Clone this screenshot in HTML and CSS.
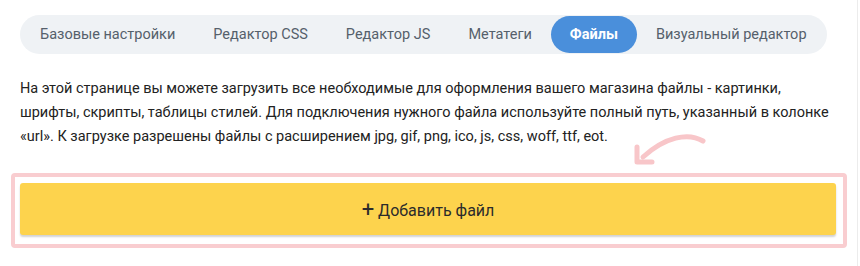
FILE: index.html
```html
<!DOCTYPE html>
<html lang="ru">
<head>
<meta charset="utf-8">
<link rel="stylesheet" href="styles.css">
</head>
<body>
<div class="page">
  <nav class="tabs">
    <span class="tab">Базовые настройки</span>
    <span class="tab">Редактор CSS</span>
    <span class="tab">Редактор JS</span>
    <span class="tab">Метатеги</span>
    <span class="tab active">Файлы</span>
    <span class="tab">Визуальный редактор</span>
  </nav>
  <p class="intro">На этой странице вы можете загрузить все необходимые для оформления вашего магазина файлы - картинки, шрифты, скрипты, таблицы стилей. Для подключения нужного файла используйте полный путь, указанный в колонке «url». К загрузке разрешены файлы с расширением jpg, gif, png, ico, js, css, woff, ttf, eot.</p>
  <div class="action">
    <button class="add"><span class="plus">+</span> Добавить файл</button>
    <div class="highlight"></div>
    <svg class="arrow" width="90" height="45" viewBox="0 0 90 45">
      <path d="M83 17 C68 8 45 13 23 33" fill="none" stroke="#f8c6c9" stroke-width="5" stroke-linecap="round"/>
      <path d="M17 23 L17 38 L32 38" fill="none" stroke="#f8c6c9" stroke-width="5" stroke-linecap="round" stroke-linejoin="round"/>
    </svg>
  </div>
</div>
</body>
</html>
```
FILE: styles.css
```css
* { box-sizing: border-box; }
html, body { margin: 0; padding: 0; background: #fff; }
body {
  font-family: Roboto, "Liberation Sans", sans-serif;
  width: 860px;
  height: 266px;
  overflow: hidden;
}
.page {
  width: 858px;
  height: 266px;
  border-right: 1px solid #ececec;
  padding: 15px 0 0 20px;
}
.tabs {
  display: inline-flex;
  align-items: center;
  background: #eff2f5;
  border-radius: 20px;
  padding: 1px;
  height: 39px;
}
.tab {
  font-size: 14.5px;
  color: #55606b;
  padding: 0 19px;
  height: 37px;
  line-height: 37px;
  border-radius: 19px;
  white-space: nowrap;
}
.tab.active {
  background: #4a8fdb;
  color: #fff;
  font-weight: 700;
}
.intro {
  margin: 23px 0 0;
  width: 815px;
  font-size: 14.5px;
  line-height: 24px;
  color: #222;
}
.action {
  position: relative;
  margin-top: 34px;
  width: 816px;
}
.add {
  display: block;
  width: 816px;
  height: 52px;
  border: 0;
  border-radius: 3px;
  background: #fdd34d;
  box-shadow: 0 2px 2px rgba(0,0,0,0.18);
  font-family: Roboto, "Liberation Sans", sans-serif;
  font-size: 16px;
  color: #2b2b2b;
  padding: 0;
}
.plus {
  font-size: 22px;
  font-weight: 400;
  vertical-align: -1px;
}
.highlight {
  position: absolute;
  left: -9px;
  top: -10px;
  width: 836px;
  height: 75px;
  border: 4px solid #f9cdd0;
  border-radius: 4px;
  pointer-events: none;
}
.arrow {
  position: absolute;
  left: 600px;
  top: -59px;
}
```
